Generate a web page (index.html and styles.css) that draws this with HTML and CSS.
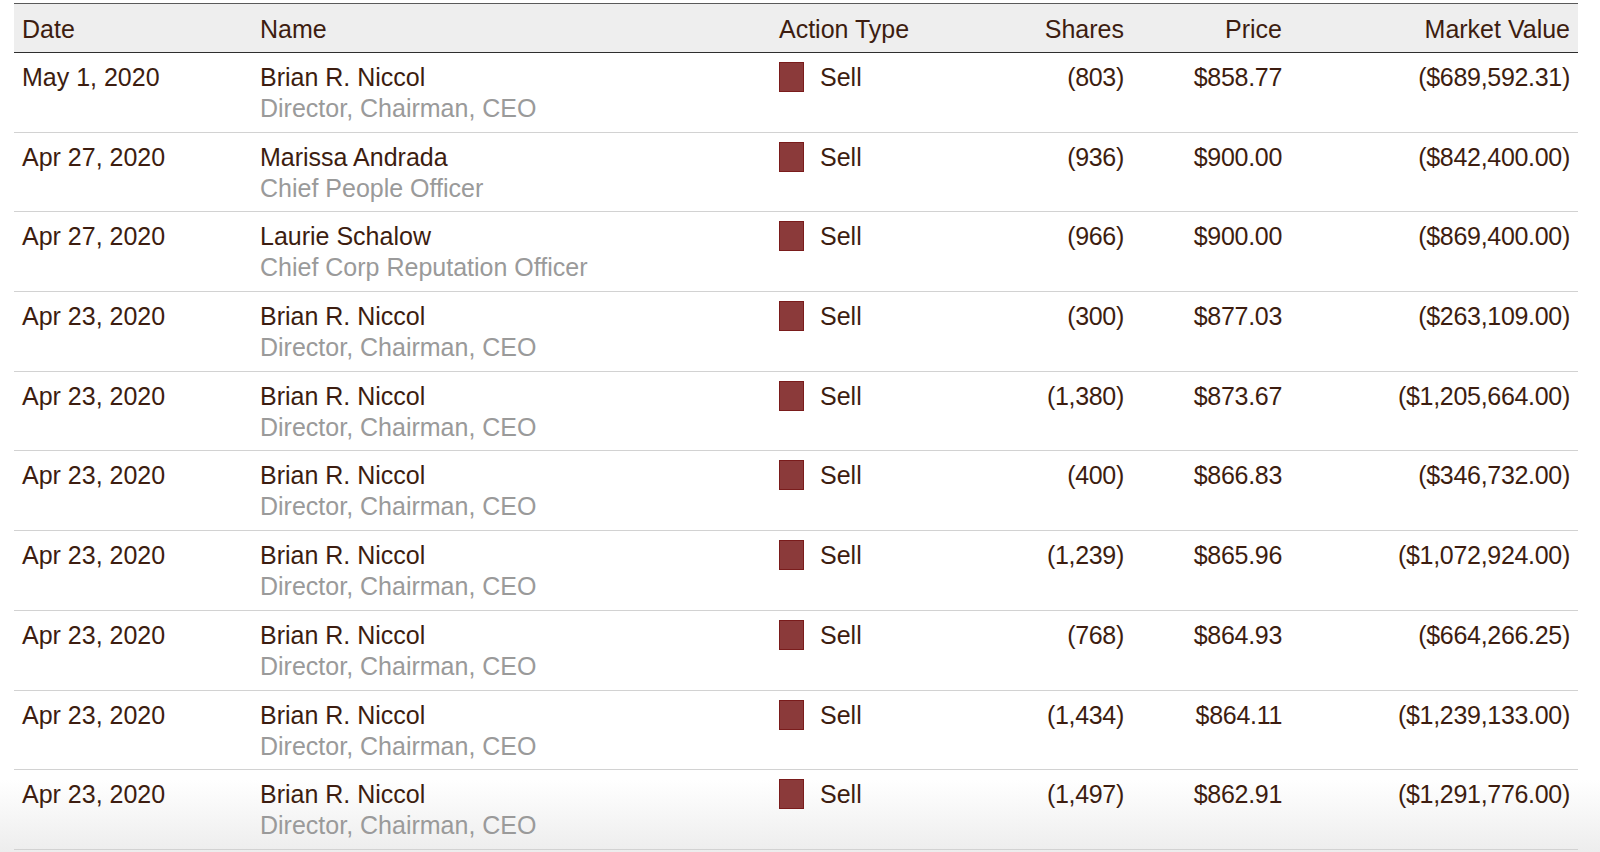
FILE: index.html
```html
<!DOCTYPE html>
<html lang="en">
<head>
<meta charset="utf-8">
<title>Insider Transactions</title>
<link rel="stylesheet" href="styles.css">
</head>
<body>
<div class="wrap">
<table class="tx">
<colgroup>
<col class="c-date"><col class="c-name"><col class="c-action"><col class="c-shares"><col class="c-price"><col class="c-value">
</colgroup>
<thead>
<tr>
<th class="l">Date</th><th class="l">Name</th><th class="l">Action Type</th><th class="r">Shares</th><th class="r">Price</th><th class="r">Market Value</th>
</tr>
</thead>
<tbody>
<tr><td>May 1, 2020</td><td><div class="nm">Brian R. Niccol</div><div class="role">Director, Chairman, CEO</div></td><td><div class="act"><span class="sw"></span>Sell</div></td><td class="r num">(803)</td><td class="r num">$858.77</td><td class="r num">($689,592.31)</td></tr>
<tr><td>Apr 27, 2020</td><td><div class="nm">Marissa Andrada</div><div class="role">Chief People Officer</div></td><td><div class="act"><span class="sw"></span>Sell</div></td><td class="r num">(936)</td><td class="r num">$900.00</td><td class="r num">($842,400.00)</td></tr>
<tr><td>Apr 27, 2020</td><td><div class="nm">Laurie Schalow</div><div class="role">Chief Corp Reputation Officer</div></td><td><div class="act"><span class="sw"></span>Sell</div></td><td class="r num">(966)</td><td class="r num">$900.00</td><td class="r num">($869,400.00)</td></tr>
<tr><td>Apr 23, 2020</td><td><div class="nm">Brian R. Niccol</div><div class="role">Director, Chairman, CEO</div></td><td><div class="act"><span class="sw"></span>Sell</div></td><td class="r num">(300)</td><td class="r num">$877.03</td><td class="r num">($263,109.00)</td></tr>
<tr><td>Apr 23, 2020</td><td><div class="nm">Brian R. Niccol</div><div class="role">Director, Chairman, CEO</div></td><td><div class="act"><span class="sw"></span>Sell</div></td><td class="r num">(1,380)</td><td class="r num">$873.67</td><td class="r num">($1,205,664.00)</td></tr>
<tr><td>Apr 23, 2020</td><td><div class="nm">Brian R. Niccol</div><div class="role">Director, Chairman, CEO</div></td><td><div class="act"><span class="sw"></span>Sell</div></td><td class="r num">(400)</td><td class="r num">$866.83</td><td class="r num">($346,732.00)</td></tr>
<tr><td>Apr 23, 2020</td><td><div class="nm">Brian R. Niccol</div><div class="role">Director, Chairman, CEO</div></td><td><div class="act"><span class="sw"></span>Sell</div></td><td class="r num">(1,239)</td><td class="r num">$865.96</td><td class="r num">($1,072,924.00)</td></tr>
<tr><td>Apr 23, 2020</td><td><div class="nm">Brian R. Niccol</div><div class="role">Director, Chairman, CEO</div></td><td><div class="act"><span class="sw"></span>Sell</div></td><td class="r num">(768)</td><td class="r num">$864.93</td><td class="r num">($664,266.25)</td></tr>
<tr><td>Apr 23, 2020</td><td><div class="nm">Brian R. Niccol</div><div class="role">Director, Chairman, CEO</div></td><td><div class="act"><span class="sw"></span>Sell</div></td><td class="r num">(1,434)</td><td class="r num">$864.11</td><td class="r num">($1,239,133.00)</td></tr>
<tr><td>Apr 23, 2020</td><td><div class="nm">Brian R. Niccol</div><div class="role">Director, Chairman, CEO</div></td><td><div class="act"><span class="sw"></span>Sell</div></td><td class="r num">(1,497)</td><td class="r num">$862.91</td><td class="r num">($1,291,776.00)</td></tr>
</tbody>
</table>
</div>
</body>
</html>
```
FILE: styles.css
```css
html, body {
  margin: 0;
  padding: 0;
}
html {
  background: #ffffff;
}
body {
  font-family: "Liberation Sans", Arial, sans-serif;
  color: #3d1d10;
  overflow: hidden;
  height: 852px;
  background: linear-gradient(to bottom, #ffffff 0px, #ffffff 780px, #ededed 852px);
}
.wrap {
  padding: 3px 22px 0 14px;
}
.tx {
  width: 1564px;
  border-collapse: collapse;
  table-layout: fixed;
  font-size: 25px;
}
.c-date { width: 238px; }
.c-name { width: 519px; }
.c-action { width: 189px; }
.c-shares { width: 172px; }
.c-price { width: 158px; }
.c-value { width: 288px; }

.tx thead th {
  background: #eeeeee;
  border-top: 1px solid #5a5a5a;
  border-bottom: 1px solid #2e2e2e;
  height: 49px;
  padding: 2px 8px 0 8px;
  font-weight: normal;
  line-height: 31px;
  vertical-align: middle;
  box-sizing: border-box;
}
.tx th.l { text-align: left; }
.tx .r { text-align: right; }

.tx tbody td {
  height: 79.7px;
  box-sizing: border-box;
  padding: 9px 8px 0 8px;
  vertical-align: top;
  line-height: 31px;
  border-bottom: 1px solid #d2d2d2;
  white-space: nowrap;
}
.tx tbody td.num {
  letter-spacing: -0.3px;
}
.role {
  color: #9a9a9a;
}
.act {
  display: flex;
  align-items: center;
  gap: 16px;
  height: 31px;
}
.sw {
  display: block;
  width: 25px;
  height: 30px;
  box-sizing: border-box;
  background: #8b3a3a;
  border: 1px solid #7a1c1c;
  margin-top: -1px;
}
```
